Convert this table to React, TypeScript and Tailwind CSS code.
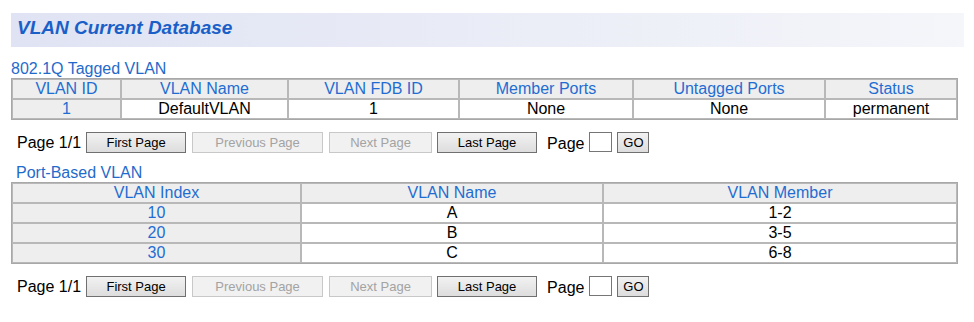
import React from "react";

type Cell = { text: string; index?: boolean };

const tagged = {
  cols: [
    { label: "VLAN ID", w: "w-[109px]" },
    { label: "VLAN Name", w: "w-[167px]" },
    { label: "VLAN FDB ID", w: "w-[171px]" },
    { label: "Member Ports", w: "w-[174px]" },
    { label: "Untagged Ports", w: "w-[192px]" },
    { label: "Status", w: "w-[132px]" },
  ],
  rows: [["1", "DefaultVLAN", "1", "None", "None", "permanent"]],
};

const portBased = {
  cols: [
    { label: "VLAN Index", w: "w-[289px]" },
    { label: "VLAN Name", w: "w-[302px]" },
    { label: "VLAN Member", w: "w-[354px]" },
  ],
  rows: [
    ["10", "A", "1-2"],
    ["20", "B", "3-5"],
    ["30", "C", "6-8"],
  ],
};

function DataTable({ cols, rows }: { cols: { label: string; w: string }[]; rows: string[][] }) {
  return (
    <table className="ml-[11px] w-[947px] table-fixed border-separate border-spacing-0 border border-[#a8a8a8] text-[16px] leading-[18px]">
      <thead>
        <tr>
          {cols.map((c) => (
            <th
              key={c.label}
              className={`${c.w} h-[20px] p-0 border border-[#b8b8b8] bg-[#eeeeee] font-normal text-center text-[#1f6dd2]`}
            >
              {c.label}
            </th>
          ))}
        </tr>
      </thead>
      <tbody>
        {rows.map((r, i) => (
          <tr key={i}>
            {r.map((v, j) => (
              <td
                key={j}
                className={
                  j === 0
                    ? "h-[20px] p-0 border border-[#b8b8b8] bg-[#eeeeee] text-center text-[#1f6dd2]"
                    : "h-[20px] p-0 border border-[#b8b8b8] bg-white text-center text-black"
                }
              >
                {v}
              </td>
            ))}
          </tr>
        ))}
      </tbody>
    </table>
  );
}

function PagerButton({ label, w, disabled }: { label: string; w: string; disabled?: boolean }) {
  return (
    <button
      disabled={disabled}
      className={
        disabled
          ? `${w} h-[21px] shrink-0 border border-[#c8c8c8] bg-[#f1f1f1] text-[13px] leading-[15px] text-[#a3a3a3]`
          : `${w} h-[21px] shrink-0 border border-[#707070] bg-gradient-to-b from-[#f2f2f2] to-[#dddddd] text-[13px] leading-[15px] text-black`
      }
    >
      {label}
    </button>
  );
}

function Pager() {
  return (
    <div className="flex items-start pl-[17px] h-[22px]">
      <span className="mt-[4px] text-[16px] leading-[18px] text-black">Page 1/1</span>
      <div className="ml-[5px]">
        <PagerButton label="First Page" w="w-[100px]" />
      </div>
      <div className="ml-[6px]">
        <PagerButton label="Previous Page" w="w-[131px]" disabled />
      </div>
      <div className="ml-[6px]">
        <PagerButton label="Next Page" w="w-[103px]" disabled />
      </div>
      <div className="ml-[5px]">
        <PagerButton label="Last Page" w="w-[100px]" />
      </div>
      <span className="ml-[10px] mt-[5px] text-[16px] leading-[18px] text-black">Page</span>
      <input
        type="text"
        className="ml-[5px] mt-[2px] w-[23px] h-[20px] border border-[#767676] bg-white outline-none"
      />
      <div className="ml-[5px]">
        <PagerButton label="GO" w="w-[32px]" />
      </div>
    </div>
  );
}

export default function App() {
  return (
    <div className="w-[974px] h-[322px] bg-white font-['Liberation_Sans',Arial,sans-serif] overflow-hidden">
      <div className="pt-[13px]">
        <div className="ml-[11px] w-[953px] h-[34px] pl-[6px] pt-[4px] bg-gradient-to-r from-[#dfe3f3] to-[#f5f6fa]">
          <h1 className="text-[19px] leading-[22px] font-bold italic text-[#1a5fc8]">VLAN Current Database</h1>
        </div>
      </div>

      <div className="mt-[12px] ml-[11px] h-[19px] text-[16px] leading-[19px] text-[#1f6bcb]">802.1Q Tagged VLAN</div>
      <DataTable cols={tagged.cols} rows={tagged.rows} />
      <div className="mt-[10px]">
        <Pager />
      </div>

      <div className="mt-[11px] ml-[16px] h-[19px] text-[16px] leading-[19px] text-[#1f6bcb]">Port-Based VLAN</div>
      <DataTable cols={portBased.cols} rows={portBased.rows} />
      <div className="mt-[10px]">
        <Pager />
      </div>
    </div>
  );
}
